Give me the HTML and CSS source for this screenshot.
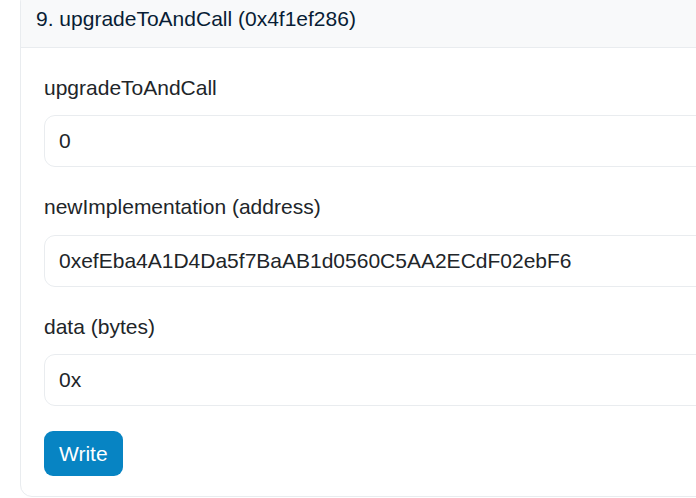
FILE: index.html
```html
<!DOCTYPE html>
<html lang="en">
<head>
<meta charset="utf-8">
<title>upgradeToAndCall</title>
<link rel="stylesheet" href="styles.css">
</head>
<body>
<div class="card">
  <div class="card-header">9. upgradeToAndCall (0x4f1ef286)</div>
  <div class="card-body">
    <div class="field">
      <label class="field-label" for="f1">upgradeToAndCall</label>
      <input class="field-input" id="f1" type="text" value="0">
    </div>
    <div class="field">
      <label class="field-label" for="f2">newImplementation (address)</label>
      <input class="field-input" id="f2" type="text" value="0xefEba4A1D4Da5f7BaAB1d0560C5AA2ECdF02ebF6">
    </div>
    <div class="field">
      <label class="field-label" for="f3">data (bytes)</label>
      <input class="field-input" id="f3" type="text" value="0x">
    </div>
    <button class="btn-write" type="button">Write</button>
  </div>
</div>
</body>
</html>
```

FILE: styles.css
```css
html, body {
  margin: 0;
  padding: 0;
  background: #ffffff;
  overflow: hidden;
}

body {
  font-family: "Liberation Sans", Arial, Helvetica, sans-serif;
  font-size: 21px;
  line-height: 31.5px;
  color: #212529;
}

.card {
  margin: -10px 0 0 20px;
  width: 760px;
  border: 1px solid #e9ecef;
  border-radius: 12px;
  background: #ffffff;
  overflow: hidden;
}

.card-header {
  background: #f8f9fa;
  border-bottom: 1px solid #e9ecef;
  padding: 12px 15px;
  color: #081d35;
}

.card-body {
  padding: 24px 24px 20px 23px;
  display: flex;
  flex-direction: column;
  align-items: flex-start;
}

.field {
  display: flex;
  flex-direction: column;
  align-self: stretch;
  margin-bottom: 24px;
}

.field + .btn-write {
  margin-top: 1px;
}

.field-label {
  margin-bottom: 12px;
  color: #212529;
}

.field-input {
  box-sizing: border-box;
  height: 52px;
  width: 100%;
  margin: 0;
  padding: 9px 14px;
  border: 1px solid #e9ecef;
  border-radius: 11px;
  font-family: "Liberation Sans", Arial, Helvetica, sans-serif;
  font-size: 21px;
  line-height: 31.5px;
  color: #212529;
  background: #ffffff;
  outline: none;
}

.btn-write {
  box-sizing: border-box;
  height: 45px;
  margin: 0;
  padding: 0 15px;
  border: none;
  border-radius: 9px;
  background: #0784c3;
  color: #ffffff;
  font-family: "Liberation Sans", Arial, Helvetica, sans-serif;
  font-size: 21px;
  line-height: 45px;
  cursor: pointer;
}
```
